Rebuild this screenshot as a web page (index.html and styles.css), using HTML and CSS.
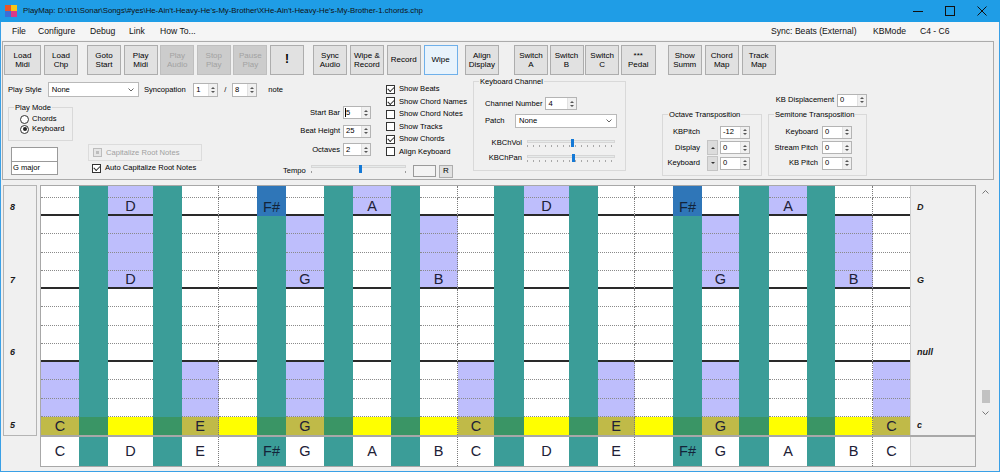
FILE: index.html
```html
<!DOCTYPE html>
<html>
<head>
<meta charset="utf-8">
<title>PlayMap</title>
<link rel="stylesheet" href="styles.css">
</head>
<body>
<div class="window">
  <div class="titlebar">
    <svg class="appicon" width="12" height="12" viewBox="0 0 12 12">
      <rect x="0" y="0" width="6" height="6" fill="#e8562a"/>
      <rect x="6" y="0" width="6" height="6" fill="#f5c518"/>
      <rect x="0" y="6" width="6" height="6" fill="#3b6fd8"/>
      <rect x="6" y="6" width="6" height="6" fill="#d83b8a"/>
    </svg>
    <span class="title">PlayMap: D:\D1\Sonar\Songs\#yes\He-Ain't-Heavy-He's-My-Brother\XHe-Ain't-Heavy-He's-My-Brother-1.chords.chp</span>
    <div class="wctl">
      <span class="wbtn"><svg width="10" height="10" viewBox="0 0 10 10"><path d="M0 5.5h10" stroke="#111" stroke-width="1"/></svg></span>
      <span class="wbtn"><svg width="10" height="10" viewBox="0 0 10 10"><rect x="0.5" y="0.5" width="9" height="9" fill="none" stroke="#111"/></svg></span>
      <span class="wbtn"><svg width="10" height="10" viewBox="0 0 10 10"><path d="M0.5 0.5l9 9M9.5 0.5l-9 9" stroke="#111"/></svg></span>
    </div>
  </div>

  <div class="menubar">
    <span class="mi m-file">File</span>
    <span class="mi m-conf">Configure</span>
    <span class="mi m-debug">Debug</span>
    <span class="mi m-link">Link</span>
    <span class="mi">How To...</span>
    <span class="mspace"></span>
    <span class="mi m-sync">Sync: Beats (External)</span>
    <span class="mi m-kb">KBMode</span>
    <span class="mi m-range">C4 - C6</span>
  </div>

  <div class="panel">
    <div class="toolbar">
      <div class="tgrp g1">
        <div class="btn wide">Load<br>Midi</div>
        <div class="btn">Load<br>Chp</div>
      </div>
      <div class="tgrp g2">
        <div class="btn">Goto<br>Start</div>
        <div class="btn">Play<br>Midi</div>
        <div class="btn dis">Play<br>Audio</div>
        <div class="btn dis">Stop<br>Play</div>
        <div class="btn dis">Pause<br>Play</div>
        <div class="btn bang">!</div>
      </div>
      <div class="tgrp g3">
        <div class="btn">Sync<br>Audio</div>
        <div class="btn">Wipe &amp;<br>Record</div>
        <div class="btn">Record</div>
        <div class="btn sel">Wipe</div>
      </div>
      <div class="tgrp g4">
        <div class="btn">Align<br>Display</div>
      </div>
      <div class="tgrp g5">
        <div class="btn">Switch<br>A</div>
        <div class="btn">Switch<br>B</div>
        <div class="btn">Switch<br>C</div>
        <div class="btn pedal">***<br>Pedal</div>
      </div>
      <div class="tgrp g6">
        <div class="btn">Show<br>Summ</div>
        <div class="btn">Chord<br>Map</div>
        <div class="btn">Track<br>Map</div>
      </div>
    </div>

    <div class="controls">
      <div class="colA">
        <div class="row1">
          <span class="lbl l-ps">Play Style</span>
          <div class="combo cb-ps"><span class="cv">None</span><svg class="chev" width="6" height="4" viewBox="0 0 6 4"><path d="M0.5 0.5l2.5 2.5 2.5-2.5" fill="none" stroke="#666"/></svg></div>
          <span class="lbl l-sync">Syncopation</span>
          <div class="spin sp26"><span class="sv">1</span><i class="sa"></i></div>
          <span class="slash">/</span>
          <div class="spin sp26"><span class="sv">8</span><i class="sa"></i></div>
          <span class="lbl l-note">note</span>
        </div>
        <div class="row2">
          <div class="subl">
            <fieldset class="grp playmode">
              <legend>Play Mode</legend>
              <div class="radio first"><i class="rb"></i><span>Chords</span></div>
              <div class="radio"><i class="rb on"></i><span>Keyboard</span></div>
            </fieldset>
            <div class="tbx"></div>
            <div class="tbx second">G major</div>
          </div>
          <div class="capcol">
            <div class="capgrp"><i class="cb dis"></i><span class="distext">Capitalize Root Notes</span></div>
            <div class="chk auto"><i class="cb on"></i><span>Auto Capitalize Root Notes</span></div>
          </div>
        </div>
      </div>

      <div class="colMid">
        <div class="midtop">
          <div class="spinblk">
            <div class="srow"><span class="slbl">Start Bar</span><div class="spin sp28"><span class="sv caret">5</span><i class="sa"></i></div></div>
            <div class="srow"><span class="slbl">Beat Height</span><div class="spin sp28"><span class="sv">25</span><i class="sa"></i></div></div>
            <div class="srow"><span class="slbl">Octaves</span><div class="spin sp28"><span class="sv">2</span><i class="sa"></i></div></div>
          </div>
          <div class="checklist">
            <div class="chk"><i class="cb on"></i><span>Show Beats</span></div>
            <div class="chk"><i class="cb on"></i><span>Show Chord Names</span></div>
            <div class="chk"><i class="cb"></i><span>Show Chord Notes</span></div>
            <div class="chk"><i class="cb"></i><span>Show Tracks</span></div>
            <div class="chk"><i class="cb on"></i><span>Show Chords</span></div>
            <div class="chk"><i class="cb"></i><span>Align Keyboard</span></div>
          </div>
        </div>
        <div class="temporow">
          <span class="lbl l-tempo">Tempo</span>
          <div class="slider s-tempo">
            <div class="track"><i class="thumb" style="margin-left:47px"></i></div>
            <div class="endticks"></div>
          </div>
          <div class="tempobox"></div>
          <div class="rbtn">R</div>
        </div>
      </div>

      <div class="colD">
        <fieldset class="grp kbch">
          <legend>Keyboard Channel</legend>
          <div class="krow chn"><span class="lbl">Channel Number</span><div class="spin sp32"><span class="sv">4</span><i class="sa"></i></div></div>
          <div class="krow patch"><span class="lbl">Patch</span><div class="combo cb-patch"><span class="cv">None</span><svg class="chev" width="6" height="4" viewBox="0 0 6 4"><path d="M0.5 0.5l2.5 2.5 2.5-2.5" fill="none" stroke="#666"/></svg></div></div>
          <div class="krow vol"><span class="lbl klbl">KBChVol</span>
            <div class="slider s-kb"><div class="track"><i class="thumb" style="margin-left:43px"></i></div><div class="ticks"></div></div>
          </div>
          <div class="krow pan"><span class="lbl klbl">KBChPan</span>
            <div class="slider s-kb"><div class="track"><i class="thumb" style="margin-left:44px"></i></div><div class="ticks"></div></div>
          </div>
        </fieldset>
      </div>

      <div class="colE">
        <div class="disprow"><span class="lbl">KB Displacement</span><div class="spin sp30"><span class="sv">0</span><i class="sa"></i></div></div>
        <div class="grprow">
          <fieldset class="grp octg">
            <legend>Octave Transposition</legend>
            <div class="orow first"><span class="olbl">KBPitch</span><span class="obtn none"></span><div class="spin sp30"><span class="sv">-12</span><i class="sa"></i></div></div>
            <div class="orow"><span class="olbl">Display</span><span class="obtn up"></span><div class="spin sp30"><span class="sv">0</span><i class="sa"></i></div></div>
            <div class="orow"><span class="olbl">Keyboard</span><span class="obtn down"></span><div class="spin sp30"><span class="sv">0</span><i class="sa"></i></div></div>
          </fieldset>
          <fieldset class="grp semg">
            <legend>Semitone Transposition</legend>
            <div class="orow first"><span class="smlbl">Keyboard</span><div class="spin sp30"><span class="sv">0</span><i class="sa"></i></div></div>
            <div class="orow"><span class="smlbl">Stream Pitch</span><div class="spin sp30"><span class="sv">0</span><i class="sa"></i></div></div>
            <div class="orow"><span class="smlbl">KB Pitch</span><div class="spin sp30"><span class="sv">0</span><i class="sa"></i></div></div>
          </fieldset>
        </div>
      </div>
    </div>
  </div>

  <div class="board">
    <div class="barlabels">
      <span class="bl r2">8</span>
      <span class="bl r6">7</span>
      <span class="bl r10">6</span>
      <span class="bl r14">5</span>
    </div>
    <div class="center">
      <div class="gridbox">
        <div class="notegrid">
          <b class="tl c2"></b><b class="gr c2"></b>
          <b class="tl c4"></b><b class="gr c4"></b>
          <b class="fs c7">F#</b><b class="tl2 c7"></b><b class="gr c7"></b>
          <b class="tl c9"></b><b class="gr c9"></b>
          <b class="tl c11"></b><b class="gr c11"></b>
          <b class="tl c14"></b><b class="gr c14"></b>
          <b class="tl c16"></b><b class="gr c16"></b>
          <b class="fs c19">F#</b><b class="tl2 c19"></b><b class="gr c19"></b>
          <b class="tl c21"></b><b class="gr c21"></b>
          <b class="tl c23"></b><b class="gr c23"></b>

          <div class="r"><i></i><i class="lv"></i><i></i><i></i><i></i><i class="lv"></i><i></i><i></i><i class="lv"></i><i></i><i></i><i></i><i class="lv"></i><i></i><i></i></div>
          <div class="r s"><i></i><i class="lv">D</i><i></i><i></i><i></i><i class="lv">A</i><i></i><i></i><i class="lv">D</i><i></i><i></i><i></i><i class="lv">A</i><i></i><i></i></div>
          <div class="r"><i></i><i class="lv"></i><i></i><i></i><i class="lv"></i><i></i><i class="lv"></i><i></i><i></i><i></i><i></i><i class="lv"></i><i></i><i class="lv"></i><i></i></div>
          <div class="r"><i></i><i class="lv"></i><i></i><i></i><i class="lv"></i><i></i><i class="lv"></i><i></i><i></i><i></i><i></i><i class="lv"></i><i></i><i class="lv"></i><i></i></div>
          <div class="r"><i></i><i class="lv"></i><i></i><i></i><i class="lv"></i><i></i><i class="lv"></i><i></i><i></i><i></i><i></i><i class="lv"></i><i></i><i class="lv"></i><i></i></div>
          <div class="r s"><i></i><i class="lv">D</i><i></i><i></i><i class="lv">G</i><i></i><i class="lv">B</i><i></i><i></i><i></i><i></i><i class="lv">G</i><i></i><i class="lv">B</i><i></i></div>
          <div class="r"><i></i><i></i><i></i><i></i><i></i><i></i><i></i><i></i><i></i><i></i><i></i><i></i><i></i><i></i><i></i></div>
          <div class="r"><i></i><i></i><i></i><i></i><i></i><i></i><i></i><i></i><i></i><i></i><i></i><i></i><i></i><i></i><i></i></div>
          <div class="r"><i></i><i></i><i></i><i></i><i></i><i></i><i></i><i></i><i></i><i></i><i></i><i></i><i></i><i></i><i></i></div>
          <div class="r s"><i></i><i></i><i></i><i></i><i></i><i></i><i></i><i></i><i></i><i></i><i></i><i></i><i></i><i></i><i></i></div>
          <div class="r"><i class="lv"></i><i></i><i class="lv"></i><i></i><i class="lv"></i><i></i><i></i><i class="lv"></i><i></i><i class="lv"></i><i></i><i class="lv"></i><i></i><i></i><i class="lv"></i></div>
          <div class="r"><i class="lv"></i><i></i><i class="lv"></i><i></i><i class="lv"></i><i></i><i></i><i class="lv"></i><i></i><i class="lv"></i><i></i><i class="lv"></i><i></i><i></i><i class="lv"></i></div>
          <div class="r"><i class="lv"></i><i></i><i class="lv"></i><i></i><i class="lv"></i><i></i><i></i><i class="lv"></i><i></i><i class="lv"></i><i></i><i class="lv"></i><i></i><i></i><i class="lv"></i></div>
          <div class="r y"><i class="ol">C</i><i></i><i class="ol">E</i><i></i><i class="ol">G</i><i></i><i></i><i class="ol">C</i><i></i><i class="ol">E</i><i></i><i class="ol">G</i><i></i><i></i><i class="ol">C</i></div>
        </div>
        <div class="chordlabels">
          <span class="cl r2">D</span>
          <span class="cl r6">G</span>
          <span class="cl r10">null</span>
          <span class="cl r14">c</span>
        </div>
      </div>
      <div class="keybox">
        <div class="keygrid">
          <i>C</i><b></b><i>D</i><b></b><i>E</i><i></i><b>F#</b><i>G</i><b></b><i>A</i><b></b><i>B</i><i>C</i><b></b><i>D</i><b></b><i>E</i><i></i><b>F#</b><i>G</i><b></b><i>A</i><b></b><i>B</i><i>C</i>
        </div>
        <div class="keyfill"></div>
      </div>
    </div>
    <div class="vscroll">
      <svg class="sarrow" width="7" height="4" viewBox="0 0 7 4"><path d="M0.5 3.5l3-3 3 3" fill="none" stroke="#777"/></svg>
      <i class="sthumb"></i>
      <svg class="sarrow down" width="7" height="4" viewBox="0 0 7 4"><path d="M0.5 0.5l3 3 3-3" fill="none" stroke="#777"/></svg>
    </div>
  </div>
</div>
</body>
</html>
```

FILE: styles.css
```css
* { box-sizing: border-box; margin: 0; padding: 0; }
html, body { width: 1000px; height: 472px; overflow: hidden; }
body {
  background: #f0f0f0;
  font-family: "Liberation Sans", Arial, sans-serif;
  font-size: 7.6px;
  line-height: 1;
  color: #000;
}
i, b { font-style: normal; font-weight: normal; }

.window {
  width: 1000px;
  height: 472px;
  border: 1px solid #3aa0e6;
  border-top: 0;
  background: #f0f0f0;
  display: flex;
  flex-direction: column;
}

/* title bar */
.titlebar {
  height: 22px;
  margin: 0 -1px;
  background: #1f9de6;
  display: flex;
  align-items: center;
  padding-left: 5px;
}
.appicon { margin-right: 6px; flex-shrink: 0; }
.title { font-size: 7.8px; color: #111; white-space: nowrap; }
.wctl { margin-left: auto; margin-right: 2px; display: flex; }
.wbtn { width: 32px; height: 22px; display: flex; align-items: center; justify-content: center; }

/* menu */
.menubar {
  height: 18px;
  background: #f5f5f5;
  display: flex;
  align-items: center;
  padding-left: 11px;
  font-size: 8.6px;
  color: #111;
}
.mi { white-space: nowrap; }
.m-file { width: 26px; }
.m-conf { width: 52px; }
.m-debug { width: 39px; }
.m-link { width: 31px; }
.mspace { flex: 1; }
.m-sync { width: 102px; }
.m-kb { width: 47px; }
.m-range { width: 79px; }

/* panel */
.panel {
  margin: 1px 0 0 1px;
  width: 992px;
  height: 139px;
  border: 1px solid #ababab;
  flex-shrink: 0;
}
.toolbar {
  height: 33px;
  display: flex;
  padding: 3px 0 0 1px;
}
.tgrp { display: flex; }
.g1 { gap: 3px; }
.g2 { gap: 2.6px; margin-left: 9px; }
.g3 { gap: 2.9px; margin-left: 9px; }
.g4 { margin-left: 7.3px; }
.g5 { gap: 1.6px; margin-left: 15px; }
.g6 { gap: 3px; margin-left: 12px; }
.btn {
  width: 34px;
  height: 30px;
  border: 1px solid #adadad;
  background: #e1e1e1;
  font-size: 8px;
  line-height: 9.3px;
  text-align: center;
  display: flex;
  align-items: center;
  justify-content: center;
  color: #000;
}
.btn.wide { width: 37px; }
.btn.pedal { width: 35px; }
.btn.dis { background: #cccccc; border-color: #bfbfbf; color: #a2a2a2; }
.btn.sel { background: #e8f3fc; border-color: #6fb0ea; }
.btn.bang { font-size: 12px; font-weight: bold; }

/* controls */
.controls { display: flex; height: 104px; padding-left: 5px; }
.lbl { white-space: nowrap; }

.colA { width: 275px; flex-shrink: 0; }
.row1 { display: flex; align-items: center; height: 15px; margin-top: 7px; }
.l-ps { width: 41px; }
.combo {
  height: 15px;
  background: #fff;
  border: 1px solid #b9b9b9;
  display: flex;
  align-items: center;
  padding: 0 4px 0 3px;
}
.combo .cv { flex: 1; }
.chev { flex-shrink: 0; }
.cb-ps { width: 94px; }
.l-sync { margin-left: 5px; width: 51px; }
.slash { width: 14px; text-align: center; }
.l-note { margin-left: 11px; }

.spin {
  display: flex;
  height: 14px;
  background: #fff;
  border: 1px solid #b4b4b4;
}
.sv { flex: 1; display: flex; align-items: center; padding-left: 2px; }
.sv.caret { padding-left: 1px; }
.sv.caret::before { content: ""; width: 1px; height: 9px; background: #000; }
.sa {
  width: 9px;
  background: #f0f0f0;
  border-left: 1px solid #e2e2e2;
  display: flex;
  flex-direction: column;
  align-items: center;
  justify-content: center;
  gap: 2px;
}
.sa::before { content: ""; border-left: 2px solid transparent; border-right: 2px solid transparent; border-bottom: 2px solid #555; }
.sa::after { content: ""; border-left: 2px solid transparent; border-right: 2px solid transparent; border-top: 2px solid #555; }
.sp26 { width: 26px; }
.sp28 { width: 28px; height: 13px; }
.sp30 { width: 30px; height: 13px; }
.sp32 { width: 32px; height: 13px; }

.row2 { display: flex; margin-top: 6px; }
.subl { width: 80px; }
fieldset.grp { border: 1px solid #d9d9d9; padding: 0; margin: 0; min-width: 0; }
fieldset.grp legend { padding: 0 1px; margin-left: 5px; line-height: 9px; font-size: 7.6px; }
.playmode { width: 65px; height: 38px; }
.radio { display: flex; align-items: center; height: 10px; gap: 3px; margin-left: 11px; }
.radio.first { margin-top: 2px; }
.rb {
  width: 9px; height: 9px; border-radius: 50%;
  border: 1px solid #333; background: #fff;
  display: flex; align-items: center; justify-content: center;
}
.rb.on::after { content: ""; width: 4px; height: 4px; border-radius: 50%; background: #222; }
.tbx {
  margin: 6px 0 0 3px;
  width: 47px;
  height: 15px;
  background: #fff;
  border: 1px solid #9a9a9a;
  display: flex;
  align-items: center;
  padding-left: 1px;
}
.tbx.second { margin-top: -1px; height: 14px; }

.capcol { margin-top: 41px; }
.capgrp {
  width: 114px;
  height: 17px;
  border: 1px solid #dcdcdc;
  display: flex;
  align-items: center;
  padding-left: 4px;
  gap: 4px;
}
.distext { color: #a0a0a0; }
.chk { display: flex; align-items: center; gap: 4px; height: 12.5px; white-space: nowrap; }
.chk.auto { margin-top: 2px; padding-left: 4px; height: 10px; }
.cb {
  width: 9px; height: 9px; flex-shrink: 0;
  border: 1px solid #333; background: #fff;
  display: flex; align-items: center; justify-content: center;
}
.cb.on::after {
  content: "";
  width: 2.5px; height: 5px;
  border: solid #222; border-width: 0 1.2px 1.2px 0;
  transform: translateY(-0.6px) rotate(45deg);
}
.cb.dis { border-color: #bcbcbc; background: #e6e6e6; }
.cb.dis::after { content: ""; width: 3px; height: 3px; background: #bdbdbd; }

.colMid { width: 187px; flex-shrink: 0; display: flex; flex-direction: column; }
.midtop { display: flex; height: 88px; }
.spinblk { width: 89px; padding-top: 31px; }
.srow { display: flex; align-items: center; height: 13px; margin-bottom: 5.5px; }
.slbl { width: 57px; text-align: right; margin-right: 3px; white-space: nowrap; }
.checklist { margin-left: 13px; padding-top: 8px; padding-left: 1px; }
.temporow { display: flex; align-items: center; height: 14px; margin-top: 1px; }
.l-tempo { width: 28px; }
.slider { display: flex; flex-direction: column; }
.track {
  height: 3px;
  background: #e7eaea;
  border: 1px solid #d6d6d6;
  display: flex;
  align-items: center;
}
.thumb { width: 3px; height: 8px; background: #1479d6; flex-shrink: 0; margin-top: 4px; }
.s-tempo { width: 95px; margin-top: -4px; }
.endticks {
  height: 2px;
  margin-top: 3px;
  background: linear-gradient(90deg, #9a9a9a 0 1px, transparent 1px calc(100% - 1px), #9a9a9a calc(100% - 1px));
}
.tempobox { margin-left: 7px; width: 23px; height: 12px; background: #f3f3f3; border: 1px solid #9a9a9a; }
.rbtn {
  margin-left: 3px; width: 14px; height: 13px;
  border: 1px solid #adadad; background: #e1e1e1;
  display: flex; align-items: center; justify-content: center;
  font-size: 8px;
}

.colD { margin-left: 3px; width: 153px; flex-shrink: 0; }
.kbch { margin-top: 2px !important; height: 94px; }
.krow { display: flex; align-items: center; padding-left: 11px; }
.chn { height: 13px; margin-top: 11px; gap: 3px; }
.patch { height: 14px; margin-top: 4px; }
.patch .lbl { width: 30px; }
.cb-patch { width: 102px; height: 14px; }
.vol { margin-top: 10px; height: 10px; }
.pan { margin-top: 5px; height: 10px; }
.klbl { width: 37px; text-align: right; margin-right: 5px; }
.s-kb { width: 88px; }
.ticks {
  height: 2px;
  margin-top: 2px;
  background: repeating-linear-gradient(90deg, #a8a8a8 0 1px, transparent 1px 6px);
}

.colE { margin-left: 36px; width: 205px; flex-shrink: 0; }
.disprow { display: flex; align-items: center; justify-content: flex-end; gap: 3px; height: 14px; margin-top: 18px; }
.grprow { display: flex; gap: 6px; margin-top: 3px; }
.octg { width: 100px; height: 66px; }
.semg { width: 99px; height: 66px; }
.orow { display: flex; align-items: center; height: 14px; margin-bottom: 1.5px; }
.orow.first { margin-top: 6px; }
.olbl { width: 37px; text-align: right; margin-right: 7px; white-space: nowrap; }
.obtn {
  width: 11px; height: 15px; margin-right: 2px;
  background: #dcdcdc; border: 1px solid #c4c4c4;
  display: flex; align-items: center; justify-content: center;
}
.obtn.none { background: transparent; border-color: transparent; }
.obtn.up::after { content: ""; border-left: 2px solid transparent; border-right: 2px solid transparent; border-bottom: 2px solid #333; }
.obtn.down::after { content: ""; border-left: 2px solid transparent; border-right: 2px solid transparent; border-top: 2.5px solid #333; }
.smlbl { width: 49px; text-align: right; margin-right: 4px; white-space: nowrap; }

/* board */
.board { display: flex; margin-top: 5px; padding-left: 2px; }
.barlabels {
  width: 34px;
  height: 251px;
  margin-right: 3px;
  border: 1px solid #b4b4b4;
  background: #f0f0f0;
  display: grid;
  grid-template-rows: 12px repeat(13, 1fr);
}
.bl, .cl {
  font-weight: bold;
  font-style: italic;
  font-size: 9px;
  color: #1a1a1a;
  display: flex;
  align-items: center;
}
.bl { padding-left: 6px; }
.r2 { grid-row: 2; }
.r6 { grid-row: 6; }
.r10 { grid-row: 10; }
.r14 { grid-row: 14; }

.center { width: 936px; display: flex; flex-direction: column; }
.gridbox {
  height: 251px;
  border: 1px solid #a8a8a8;
  display: flex;
}
.notegrid {
  width: 869px;
  height: 249px;
  display: grid;
  grid-template-columns: 38px 29px 45px 29px 37px 38px 29px 38px 29px 38px 29px 38px 36px 30px 45px 29px 37px 38px 29px 37px 30px 38px 28px 38px 37px;
  grid-template-rows: 12px repeat(13, 1fr);
  flex-shrink: 0;
}
.c2 { grid-column: 2; }
.c4 { grid-column: 4; }
.c7 { grid-column: 7; }
.c9 { grid-column: 9; }
.c11 { grid-column: 11; }
.c14 { grid-column: 14; }
.c16 { grid-column: 16; }
.c19 { grid-column: 19; }
.c21 { grid-column: 21; }
.c23 { grid-column: 23; }
.tl { grid-row: 1 / 14; background: #3b9d98; }
.tl2 { grid-row: 3 / 14; background: #3b9d98; }
.gr { grid-row: 14 / 15; background: #3a9565; }
.fs {
  grid-row: 1 / 3;
  background: #2f76b8;
  display: flex;
  align-items: flex-end;
  justify-content: center;
  font-size: 14.5px;
  color: #13243a;
  line-height: 18px;
}
.r { display: contents; }
.r > i {
  background: #fff;
  border-bottom: 1px dotted #8a8a8a;
  display: flex;
  align-items: center;
  justify-content: center;
  font-size: 14.5px;
  color: #202036;
}
.r.s > i { border-bottom: 2px solid #2a2a2a; }
.r > i:nth-child(3), .r > i:nth-child(7), .r > i:nth-child(10), .r > i:nth-child(14) { border-right: 1px dotted #7a7a7a; }
.r > i.lv { background: #bebefc; }
.r.y > i { background: #ffff00; border-bottom: 0; }
.r.y > i.ol { background: #c0ba48; }

.chordlabels {
  width: 65px;
  border-left: 1px solid #cfcfcf;
  background: #f0f0f0;
  display: grid;
  grid-template-rows: 12px repeat(13, 1fr);
  padding-left: 6px;
}

.keybox {
  height: 31px;
  border: 1px solid #a8a8a8;
  display: flex;
}
.keygrid {
  width: 869px;
  height: 29px;
  display: grid;
  grid-template-columns: 38px 29px 45px 29px 37px 38px 29px 38px 29px 38px 29px 38px 36px 30px 45px 29px 37px 38px 29px 37px 30px 38px 28px 38px 37px;
  flex-shrink: 0;
}
.keygrid > i, .keygrid > b {
  display: flex;
  align-items: center;
  justify-content: center;
  font-size: 14.5px;
}
.keygrid > i { background: #fff; color: #202036; }
.keygrid > b { background: #3b9d98; color: #13243a; }
.keygrid > :nth-child(5), .keygrid > :nth-child(12), .keygrid > :nth-child(17), .keygrid > :nth-child(24) { border-right: 1px dotted #7a7a7a; }
.keyfill { flex: 1; background: #f0f0f0; border-left: 1px solid #cfcfcf; }

.vscroll {
  width: 19px;
  height: 233px;
  display: flex;
  flex-direction: column;
  align-items: center;
  padding: 5px 0 3px;
}
.sthumb { margin-top: auto; width: 8px; height: 13px; background: #c2c2c2; }
.sarrow.down { margin-top: 8px; }
```
